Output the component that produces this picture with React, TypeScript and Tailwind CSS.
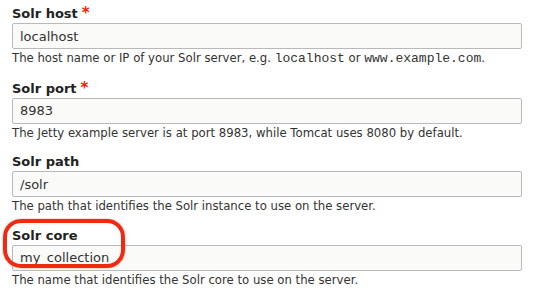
import React from 'react'

const sans = '"DejaVu Sans", "Noto Sans", sans-serif'

type Field = {
  label: string
  value: string
  required?: boolean
  help: React.ReactNode
  circled?: boolean
}

const Code = ({ children }: { children: React.ReactNode }) => (
  <code className="font-['Liberation_Mono',monospace] text-[13px]">{children}</code>
)

const fields: Field[] = [
  {
    label: 'Solr host',
    value: 'localhost',
    required: true,
    help: (
      <>
        The host name or IP of your Solr server, e.g. <Code>localhost</Code> or{' '}
        <Code>www.example.com</Code>.
      </>
    ),
  },
  {
    label: 'Solr port',
    value: '8983',
    required: true,
    help: 'The Jetty example server is at port 8983, while Tomcat uses 8080 by default.',
  },
  {
    label: 'Solr path',
    value: '/solr',
    help: 'The path that identifies the Solr instance to use on the server.',
  },
  {
    label: 'Solr core',
    value: 'my_collection',
    help: 'The name that identifies the Solr core to use on the server.',
    circled: true,
  },
]

export default function App() {
  return (
    <div
      className="h-[294px] w-[534px] overflow-hidden bg-white px-[12px] pt-[4px] text-[#333]"
      style={{ fontFamily: sans }}
    >
      {fields.map((f) => (
        <div key={f.label} className="relative mb-[10.5px]">
          {f.circled && (
            <div className="pointer-events-none absolute top-[-6.5px] left-[-9px] h-[49px] w-[122px] rounded-[18px] border-[4px] border-[#ee2a13] shadow-[0_0_2px_rgba(238,42,19,0.5)]" />
          )}
          <label className="block h-[19px] text-[13px] leading-[19px] font-bold text-[#222]">
            {f.label}
            {f.required && <span className="ml-[4px] text-[15px] text-[#e62600]">*</span>}
          </label>
          <input
            readOnly
            value={f.value}
            className="block h-[26px] w-[510px] rounded-[2px] border border-[#b9b9b9] bg-[#fafaf8] px-[7px] text-[13px] text-[#333] outline-none"
            style={{ fontFamily: sans }}
          />
          <div className="text-[11.7px] leading-[18px] text-[#333]">{f.help}</div>
        </div>
      ))}
    </div>
  )
}
